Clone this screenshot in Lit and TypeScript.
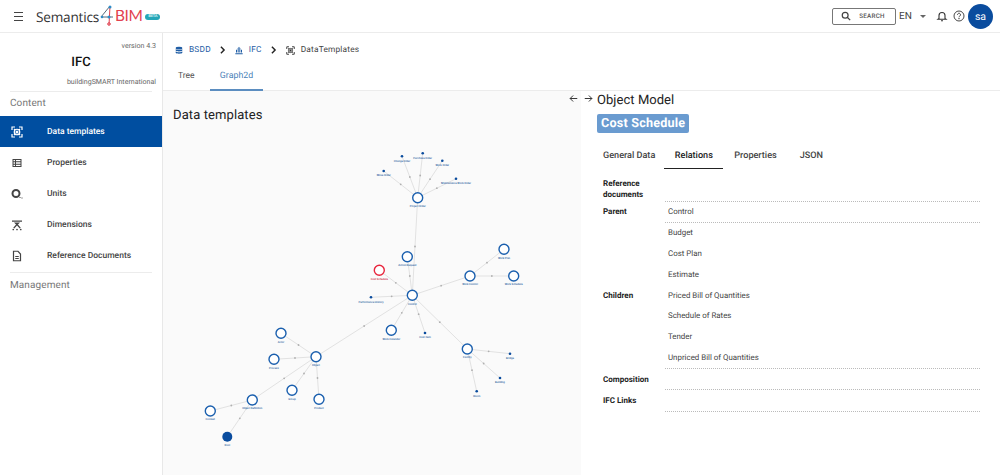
import { LitElement, html, css, svg } from "lit";
import { customElement } from "lit/decorators.js";

type N = { id: string; x: number; y: number; k: "o" | "d" | "r" | "f"; label: string };
const nodes: N[] = [
  { id: "po", x: 417.7, y: 196.7, k: "o", label: "Project Order" },
  { id: "co", x: 402, y: 155.3, k: "d", label: "Change Order" },
  { id: "pu", x: 422.7, y: 152.3, k: "d", label: "Purchase Order" },
  { id: "wo", x: 442.3, y: 159.7, k: "d", label: "Work Order" },
  { id: "mo", x: 383.7, y: 170, k: "d", label: "Move Order" },
  { id: "mw", x: 456, y: 177.7, k: "d", label: "Maintenance Work Order" },
  { id: "ar", x: 407.3, y: 255.7, k: "o", label: "Action Request" },
  { id: "cs", x: 379.3, y: 269.3, k: "r", label: "Cost Schedule" },
  { id: "wc", x: 470, y: 275, k: "o", label: "Work Control" },
  { id: "wp", x: 504, y: 248.3, k: "o", label: "Work Plan" },
  { id: "ws", x: 513.7, y: 275, k: "o", label: "Work Schedule" },
  { id: "ct", x: 412.3, y: 294.3, k: "o", label: "Control" },
  { id: "ph", x: 371, y: 296.3, k: "d", label: "Performance History" },
  { id: "wk", x: 391.3, y: 329.3, k: "o", label: "Work Calendar" },
  { id: "ci", x: 425, y: 332, k: "d", label: "Cost Item" },
  { id: "fa", x: 467.3, y: 348, k: "o", label: "Facility" },
  { id: "br", x: 510, y: 352.7, k: "d", label: "Bridge" },
  { id: "bu", x: 500, y: 377, k: "d", label: "Building" },
  { id: "ro", x: 476.7, y: 390.3, k: "d", label: "Room" },
  { id: "ob", x: 316, y: 355.7, k: "o", label: "Object" },
  { id: "ac", x: 281, y: 332.3, k: "o", label: "Actor" },
  { id: "pr", x: 274, y: 358.3, k: "o", label: "Process" },
  { id: "gr", x: 292, y: 389.3, k: "o", label: "Group" },
  { id: "pd", x: 319, y: 398.3, k: "o", label: "Product" },
  { id: "od", x: 252.3, y: 399, k: "o", label: "Object Definition" },
  { id: "cx", x: 210.3, y: 410, k: "o", label: "Context" },
  { id: "rt", x: 227.3, y: 435.7, k: "f", label: "Root" },
];
const links: [string, string][] = [
  ["po", "co"], ["po", "pu"], ["po", "wo"], ["po", "mo"], ["po", "mw"], ["ct", "po"],
  ["ct", "ar"], ["ct", "cs"], ["ct", "wc"], ["wc", "wp"], ["wc", "ws"], ["ct", "ph"],
  ["ct", "wk"], ["ct", "ci"], ["ct", "fa"], ["fa", "br"], ["fa", "bu"], ["fa", "ro"],
  ["ob", "ct"], ["ob", "ac"], ["ob", "pr"], ["ob", "gr"], ["ob", "pd"], ["od", "ob"],
  ["od", "cx"], ["od", "rt"],
];
const at = (id: string) => nodes.find((n) => n.id === id)!;

const targetIcon = html`<svg viewBox="0 0 24 24" fill="none" stroke="currentColor" stroke-width="2.400"><path d="M2 8V2h6M16 2h6v6M22 16v6h-6M8 22H2v-6"/><circle cx="12" cy="12" r="5.500"/><circle cx="12" cy="12" r="1.800" fill="currentColor"/><path d="M6 6l2.500 2.500M18 6l-2.500 2.500M6 18l2.500-2.500M18 18l-2.500-2.500"/></svg>`;
const chevron = html`<svg class="chev" viewBox="0 0 8 10" fill="none" stroke="#222" stroke-width="1.800"><path d="M2 1l4 4-4 4"/></svg>`;
const navItems = [
  { label: "Data templates", active: true, icon: targetIcon },
  { label: "Properties", icon: html`<svg viewBox="0 0 24 24" fill="currentColor"><path fill-rule="evenodd" d="M3 4h18v16H3zM5 6v2.500h3V6zm5 0v2.500h9V6zM5 10.500v3h3v-3zm5 0v3h9v-3zM5 15.500V18h3v-2.500zm5 0V18h9v-2.500z"/></svg>` },
  { label: "Units", icon: html`<svg viewBox="0 0 24 24" fill="none" stroke="currentColor"><circle cx="10" cy="11" r="7" stroke-width="4"/><path d="M17 18l2 2M21 20h2" stroke-width="2"/></svg>` },
  { label: "Dimensions", icon: html`<svg viewBox="0 0 24 24" fill="currentColor"><path d="M2 3h20v2.500H2zM6 7h12l-3.500 3.500h-1l6 7-2 1.500L12 13l-5.500 6-2-1.500 6-7h-1z"/><circle cx="4.500" cy="21" r="1.700"/><circle cx="12" cy="21" r="1.700"/><circle cx="19.500" cy="21" r="1.700"/></svg>` },
  { label: "Reference Documents", icon: html`<svg viewBox="0 0 24 24" fill="none" stroke="currentColor" stroke-width="2.400"><path d="M5 2.500h9l5 5.500v13.500H5z"/><path d="M8.500 13h7M8.500 17h7"/></svg>` },
];
const rows: { label: string; values: string[]; line: number[]; cls?: string }[] = [
  { label: "Reference documents", values: [""], line: [0], cls: "two" },
  { label: "Parent", values: ["Control"], line: [0] },
  { label: "", values: ["Budget", "Cost Plan", "Estimate"], line: [] },
  { label: "Children", values: ["Priced Bill of Quantities", "Schedule of Rates", "Tender", "Unpriced Bill of Quantities"], line: [3] },
  { label: "Composition", values: [""], line: [0], cls: "sp" },
  { label: "IFC Links", values: [""], line: [0], cls: "sp" },
];

@customElement("app-root")
export class AppRoot extends LitElement {
  static styles = css`
    :host { display: block; width: 1000px; height: 475px; overflow: hidden; font-family: Roboto, "Liberation Sans", sans-serif; color: #212121; background: #fff; text-rendering: geometricPrecision; }
    header { height: 32px; display: flex; align-items: center; border-bottom: 1px solid #ececec; padding: 0 7px 0 14px; }
    .burger { width: 9px; height: 7px; border-top: 1px solid #444; border-bottom: 1px solid #444; position: relative; margin-right: 13px; }
    .burger::after { content: ""; position: absolute; left: 0; right: 0; top: 3px; height: 1px; background: #444; }
    .logo { display: flex; align-items: center; height: 32px; font-size: 13.600px; letter-spacing: -0.200px; color: #333; font-family: "Open Sans", sans-serif; }
    .logo svg { width: 16px; height: 22px; }
    .bim { color: #e2404f; font-family: Lato, sans-serif; font-size: 15.500px; letter-spacing: -0.500px; }
    .beta { background: #24a6b8; color: #cfeef2; font-size: 4px; font-weight: 700; border-radius: 3px; width: 15px; height: 6px; line-height: 6px; text-align: center; margin: 2px 0 0 3px; }
    .spacer { flex: 1; }
    .search { width: 64px; height: 17px; box-sizing: border-box; border: 1px solid #777; border-radius: 2px; display: flex; align-items: center; justify-content: center; gap: 8px; font-size: 6.300px; font-weight: 500; letter-spacing: .2px; color: #555; margin-right: 3px; }
    .search svg { width: 10px; height: 10px; margin-left: -2px; }
    .lang { font-size: 10px; color: #444; width: 21px; }
    .caret { width: 0; height: 0; border: 3px solid transparent; border-top: 3px solid #666; border-bottom: 0; margin: 1px 10px 0 0; }
    .hi { width: 12px; height: 12px; color: #333; margin-right: 5px; }
    .avatar { width: 25px; height: 25px; border-radius: 50%; background: #0a4c9e; color: #fff; font-size: 10.500px; display: flex; align-items: center; justify-content: center; margin-left: -2px; }
    .body { display: flex; height: 442px; }
    aside { width: 162px; border-right: 1px solid #e8e8e8; flex: none; }
    .ver { font-size: 7.100px; color: #666; text-align: right; padding: 8px 6px 0 0; line-height: 9px; }
    .title { font-size: 13px; font-weight: 500; color: #111; text-align: center; line-height: 16px; margin-top: 5px; }
    .org { font-size: 7.050px; color: #666; text-align: right; padding: 6px 6px 0 0; line-height: 9px; }
    .sec { font-size: 10px; color: #777; line-height: 12px; padding: 6px 0 0 10px; height: 21px; box-sizing: border-box; letter-spacing: .1px; }
    .sec.m { padding-top: 7px; }
    .rule { height: 1px; background: #ececec; margin: 5px 10px 0; }
    .rule.low { margin-top: 1px; }
    .item { height: 31px; display: flex; align-items: center; font-size: 8.500px; font-weight: 500; color: #444; padding-left: 11px; }
    .item span { padding-top: 1px; }
    .item.on { background: #004ea0; color: #fff; }
    .item svg { width: 12px; height: 12px; margin-right: 24px; flex: none; color: #444; }
    .item.on svg { color: #fff; }
    .item.first { margin-top: 3px; }
    .main { flex: 1; min-width: 0; display: flex; flex-direction: column; }
    .crumbs { height: 33px; display: flex; align-items: center; padding: 1px 0 0 12px; font-size: 8.300px; letter-spacing: .2px; color: #1f5da5; box-sizing: border-box; }
    .crumbs svg { width: 8px; height: 9px; margin-right: 6px; flex: none; }
    .crumbs svg.chev { width: 7px; height: 8px; margin: 0 9px 0 8px; }
    .crumbs .last { color: #444; display: flex; align-items: center; }
    .crumbs .last svg { color: #333; width: 9px; height: 9px; }
    .tabs { height: 24px; display: flex; font-size: 8.500px; color: #555; border-bottom: 1px solid #ececec; }
    .tab { padding-left: 15px; line-height: 21px; box-sizing: border-box; height: 25px; width: 47px; }
    .tab.on { color: #4a7fb8; border-bottom: 2px solid #5b8dc0; padding: 0; width: 53px; text-align: center; font-size: 8.800px; }
    .content { flex: 1; display: flex; min-height: 0; position: relative; }
    .graph { width: 418px; background: #fafafa; flex: none; position: relative; }
    .graph h2 { margin: 0; font-size: 13px; font-weight: 400; color: #222; padding: 16px 0 0 10px; line-height: 18px; letter-spacing: .1px; }
    .graph svg { position: absolute; left: -163px; top: -90px; width: 1000px; height: 475px; pointer-events: none; }
    .detail { flex: 1; min-width: 0; background: #fff; padding: 0 0 0 16px; }
    .arrows { position: absolute; left: 406px; top: 3px; display: flex; gap: 6px; }
    .arrows svg { width: 9px; height: 9px; color: #222; }
    .om { font-size: 13px; line-height: 18px; color: #222; letter-spacing: .05px; padding-top: 1px; }
    .chip { display: block; width: fit-content; margin-top: 4px; background: #6a9bd0; color: #fff; font-size: 12.600px; font-weight: 700; line-height: 19px; padding: 0 4px; border-radius: 2px; letter-spacing: .2px; height: 19px; }
    .dtabs { display: flex; margin-top: 13px; font-size: 9.100px; font-weight: 500; color: #444; height: 23px; }
    .dtab { line-height: 20px; padding: 0 6px; }
    .dtab.on { color: #222; border-bottom: 1.500px solid #222; height: 23px; box-sizing: border-box; width: 59px; text-align: center; padding: 0; margin: 0 5px 0 3px; }
    .dtab.p { padding-right: 17px; }
    .table { width: 383px; margin-top: 6px; }
    .row { display: grid; grid-template-columns: 68px 315px; font-size: 8px; line-height: 11px; }
    .lab { font-weight: 700; color: #222; padding-top: 4px; margin-left: 6px; margin-right: -6px; }
    .row.two .lab { padding-top: 3px; }
    .row.sp .lab { padding-top: 5px; }
    .val { color: #444; font-size: 7.900px; height: 20.900px; line-height: 20.900px; box-sizing: border-box; padding-left: 3px; }
    .val.ln { border-bottom: 1px dotted #bbb; }
    .row.two .val { height: 27px; }
    .row.sp .val { height: 21.300px; }
  `;

  render() {
    return html`
      <header>
        <div class="burger"></div>
        <div class="logo">
          <span>Semantics</span>
          <svg viewBox="0 0 16 22" fill="none">
            <path d="M11 1L2 12h12" stroke="#5a6a78" stroke-width="1"/>
            <path d="M11 1l-1 19" stroke="#e2404f" stroke-width="1"/>
            <circle cx="11" cy="2" r="1.500" fill="#2d8cc8"/><circle cx="3" cy="12" r="1.300" fill="#2d8cc8"/><circle cx="10" cy="12" r="1.500" fill="#2d8cc8"/><circle cx="10" cy="19" r="1.300" stroke="#e2404f"/>
          </svg>
          <span class="bim">BIM</span>
          <div class="beta">BETA</div>
        </div>
        <div class="spacer"></div>
        <div class="search">
          <svg viewBox="0 0 24 24" fill="none" stroke="#444" stroke-width="3"><circle cx="10" cy="10" r="7"/><path d="M15 15l7 7"/></svg>
          <span>SEARCH</span>
        </div>
        <div class="lang">EN</div>
        <div class="caret"></div>
        <svg class="hi" viewBox="0 0 24 24" fill="none" stroke="currentColor" stroke-width="2.200"><path d="M6 17V11a6 6 0 0 1 12 0v6l2 1.500H4z"/><path d="M10 21.500h4"/></svg>
        <svg class="hi" viewBox="0 0 24 24" fill="none" stroke="currentColor" stroke-width="1.800"><circle cx="12" cy="12" r="10"/><path d="M9 9.500a3 3 0 1 1 4.500 2.600c-1 .6-1.500 1.200-1.500 2.400"/><circle cx="12" cy="17.500" r=".6"/></svg>
        <div class="avatar">sa</div>
      </header>
      <div class="body">
        <aside>
          <div class="ver">version 4.3</div>
          <div class="title">IFC</div>
          <div class="org">buildingSMART International</div>
          <div class="rule"></div>
          <div class="sec">Content</div>
          ${navItems.map((n, i) => html`<div class="item ${n.active ? "on" : ""} ${i === 0 ? "first" : ""}">${n.icon}<span>${n.label}</span></div>`)}
          <div class="rule low"></div>
          <div class="sec m">Management</div>
        </aside>
        <div class="main">
          <div class="crumbs">
            <svg viewBox="0 0 24 24" fill="currentColor"><ellipse cx="12" cy="5" rx="10" ry="4"/><path d="M2 8.500c2 3 18 3 20 0V12c-2 3.500-18 3.500-20 0zM2 15c2 3 18 3 20 0v4c-2 3.500-18 3.500-20 0z"/></svg>
            <span>BSDD</span>${chevron}
            <svg viewBox="0 0 24 24" fill="currentColor"><path d="M1 20h22v3H1zM3 18v-8h3v8zM8 18V5l3-4v17zM13 18V1l3 4v13zM18 18v-8h3v8z"/></svg>
            <span>IFC</span>${chevron}
            <span class="last">${targetIcon}<span>DataTemplates</span></span>
          </div>
          <div class="tabs">
            <div class="tab">Tree</div>
            <div class="tab on">Graph2d</div>
          </div>
          <div class="content">
            <div class="graph">
              <h2>Data templates</h2>
              <svg viewBox="0 0 1000 475">
                ${links.map(([a, b]) => {
                  const p = at(a), q = at(b);
                  return svg`<line x1=${p.x} y1=${p.y} x2=${q.x} y2=${q.y} stroke="#e2e2e2" stroke-width="1"/>
                    <circle cx=${(p.x + q.x) / 2} cy=${(p.y + q.y) / 2} r="0.900" fill="#b0b0b0"/>`;
                })}
                ${nodes.map((n) => {
                  const col = n.k === "r" ? "#e8243c" : "#1a5fae";
                  const fy = n.k === "d" ? n.y + 5.3 : n.y + 9.3;
                  return svg`
                    ${n.k === "d"
                      ? svg`<circle cx=${n.x} cy=${n.y} r="1.300" fill="#0a4c9e"/>`
                      : n.k === "f"
                      ? svg`<circle cx=${n.x} cy=${n.y} r="5" fill="#0a4c9e"/>`
                      : svg`<circle cx=${n.x} cy=${n.y} r="5" fill="#fff" stroke=${col} stroke-width="1.400"/>`}
                    <text x=${n.x} y=${fy} text-anchor="middle" font-size="2.700" font-weight="500" text-rendering="geometricPrecision" fill=${n.k === "r" ? "#c8243c" : "#2a5f9e"}>${n.label}</text>`;
                })}
              </svg>
            </div>
            <div class="arrows">
              <svg viewBox="0 0 24 24" fill="none" stroke="currentColor" stroke-width="2.400"><path d="M22 12H3M11 4l-8 8 8 8"/></svg>
              <svg viewBox="0 0 24 24" fill="none" stroke="currentColor" stroke-width="2.400"><path d="M2 12h19M13 4l8 8-8 8"/></svg>
            </div>
            <div class="detail">
              <div class="om">Object Model</div>
              <div class="chip">Cost Schedule</div>
              <div class="dtabs">
                <div class="dtab">General Data</div>
                <div class="dtab on">Relations</div>
                <div class="dtab p">Properties</div>
                <div class="dtab">JSON</div>
              </div>
              <div class="table">
                ${rows.map((r) => html`<div class="row ${r.cls ?? ""}">
                  <div class="lab">${r.label}</div>
                  <div>${r.values.map((v, i) => html`<div class="val ${r.line.includes(i) ? "ln" : ""}">${v}</div>`)}</div>
                </div>`)}
              </div>
            </div>
          </div>
        </div>
      </div>
    `;
  }
}
